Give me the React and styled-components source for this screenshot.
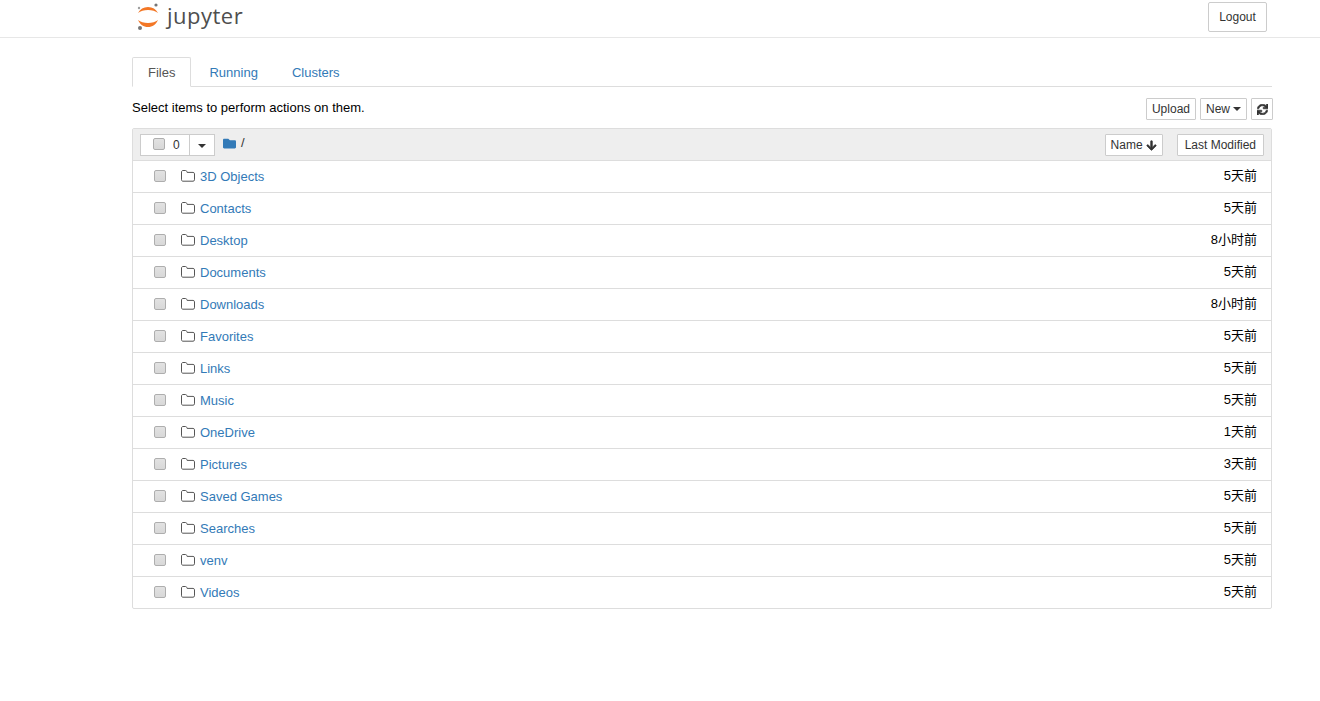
import styled, { createGlobalStyle } from 'styled-components'
import { FaArrowDown, FaFolder, FaSync } from 'react-icons/fa'

const GlobalStyle = createGlobalStyle`
  html, body {
    margin: 0;
    padding: 0;
    background: #fff;
    color: #000;
    font-family: "Liberation Sans", Arial, "Noto Sans CJK SC", sans-serif;
    font-size: 13px;
    line-height: 18px;
  }
`

const Header = styled.header`
  height: 37px;
  border-bottom: 1px solid #e7e7e7;
`
const HeaderInner = styled.div`
  width: 1140px;
  margin-left: 132px;
  height: 100%;
  display: flex;
  justify-content: space-between;
  align-items: flex-start;
`
const LogoBox = styled.div`
  display: flex;
  align-items: flex-start;
  gap: 5px;
  margin-left: 5px;
  padding-top: 1px;
`
const LogoText = styled.span`
  font-family: "Open Sans", sans-serif;
  font-size: 22px;
  line-height: 28px;
  letter-spacing: 0.5px;
  color: #4e4e4e;
`
const LogoutButton = styled.button`
  width: 59px;
  height: 30px;
  margin: 2px 5px 0 0;
  padding: 0;
  background: #fff;
  border: 1px solid #ccc;
  border-radius: 2px;
  color: #333;
  font: 12px "Liberation Sans", sans-serif;
`
const Main = styled.main`
  width: 1140px;
  margin: 19px 0 0 132px;
`
const Tabs = styled.nav`
  display: flex;
  align-items: flex-start;
  box-sizing: border-box;
  height: 30px;
  border-bottom: 1px solid #ddd;
`
const Tab = styled.a`
  box-sizing: border-box;
  height: ${p => (p.$active ? 30 : 29)}px;
  padding: 6px 15px;
  margin-right: 2px;
  border: 1px solid ${p => (p.$active ? '#ddd' : 'transparent')};
  border-bottom: ${p => (p.$active ? '1px solid #fff' : 'none')};
  border-radius: 2px 2px 0 0;
  color: ${p => (p.$active ? '#555' : '#337ab7')};
  background: #fff;
`
const ToolbarRow = styled.div`
  display: flex;
  justify-content: space-between;
  align-items: flex-start;
  height: 41px;
  padding-top: 11px;
  box-sizing: border-box;
`
const Hint = styled.span`
  line-height: 20px;
`
const ToolbarButtons = styled.div`
  display: flex;
  gap: 4px;
  margin-right: -1px;
`
const SmallButton = styled.button`
  box-sizing: border-box;
  height: 22px;
  display: inline-flex;
  align-items: center;
  justify-content: center;
  gap: 3px;
  padding: 0 ${p => p.$pad || 5}px;
  background: #fff;
  border: 1px solid #ccc;
  border-radius: 1px;
  color: #333;
  font: 12px "Liberation Sans", sans-serif;
`
const Caret = styled.span`
  display: inline-block;
  width: 0;
  height: 0;
  border-top: 4px solid #333;
  border-left: 4px solid transparent;
  border-right: 4px solid transparent;
`
const Panel = styled.section`
  border: 1px solid #ddd;
  border-radius: 2px;
`
const PanelHead = styled.div`
  box-sizing: border-box;
  height: 32px;
  display: flex;
  align-items: center;
  background: #eee;
  padding: 0 7px;
  border-bottom: 1px solid #ddd;
`
const SelectGroup = styled.div`
  display: flex;
  box-sizing: border-box;
  height: 22px;
  width: 75px;
  background: #fff;
  border: 1px solid #ccc;
  margin-top: 1px;
`
const SelectCount = styled.div`
  flex: 1;
  display: flex;
  align-items: center;
  gap: 8px;
  padding-left: 12px;
  color: #333;
  font-size: 12px;
  border-right: 1px solid #ccc;
`
const SelectCaret = styled.div`
  width: 24px;
  display: flex;
  align-items: center;
  justify-content: center;
  padding-top: 2px;
  box-sizing: border-box;
`
const Check = styled.input.attrs({ type: 'checkbox' })`
  appearance: none;
  box-sizing: border-box;
  width: 12px;
  height: 12px;
  margin: -2px 0 0;
  background: linear-gradient(#e2e2e2, #d8d8d8);
  border: 1px solid #aeaeae;
  border-radius: 2px;
  flex: none;
`
const Crumb = styled.div`
  display: flex;
  align-items: center;
  gap: 5px;
  margin-left: 8px;
  margin-top: -3px;
  color: #333;
  font-size: 13px;
`
const SortButtons = styled.div`
  margin-left: auto;
  display: flex;
  gap: 14px;
  margin-top: 1px;
`
const Row = styled.div`
  box-sizing: border-box;
  height: ${p => (p.$last ? 31 : 32)}px;
  display: flex;
  align-items: center;
  padding: 0 14px 0 21px;
  border-bottom: ${p => (p.$last ? 'none' : '1px solid #ddd')};
`
const RowFolder = styled.svg`
  width: 14px;
  height: 12px;
  margin-left: 15px;
  margin-top: -2px;
  flex: none;
`
const RowLink = styled.a`
  margin-left: 5px;
  color: #337ab7;
  text-decoration: none;
  padding-top: 1px;
`
const RowTime = styled.span`
  margin-left: auto;
  margin-top: -2px;
  font-family: "Liberation Sans", "Noto Sans CJK SC", sans-serif;
`

const files = [
  ['3D Objects', '5天前'],
  ['Contacts', '5天前'],
  ['Desktop', '8小时前'],
  ['Documents', '5天前'],
  ['Downloads', '8小时前'],
  ['Favorites', '5天前'],
  ['Links', '5天前'],
  ['Music', '5天前'],
  ['OneDrive', '1天前'],
  ['Pictures', '3天前'],
  ['Saved Games', '5天前'],
  ['Searches', '5天前'],
  ['venv', '5天前'],
  ['Videos', '5天前'],
]

function JupyterMark() {
  return (
    <svg width="25" height="30" viewBox="0 0 25 30">
      <path d="M1 12C3 8 6.500 6 11 6s8 2 10 6C18.500 10 15 9 11 9S3.500 10 1 12Z" fill="#f37726" />
      <path d="M1 19c2.500 2 6 3 10 3s7.500-1 10-3c-2 4.500-5.500 7-10 7S3 23.500 1 19Z" fill="#f37726" />
      <circle cx="19" cy="4" r="1.600" fill="#767677" />
      <circle cx="3" cy="27" r="2" fill="#767677" />
      <circle cx="2" cy="7" r="1.200" fill="#9e9e9e" />
    </svg>
  )
}

function OutlineFolder() {
  return (
    <RowFolder viewBox="0 0 14 12">
      <path d="M.5 9.800V2C.5 1.200 1.100.5 2 .5h2.500c.7 0 1.100.4 1.300 1l.3.900h6c.8 0 1.400.6 1.400 1.400v6c0 .8-.6 1.400-1.400 1.400H2C1.100 11.200.5 10.600.5 9.800Z" fill="none" stroke="#555" strokeWidth="1" />
    </RowFolder>
  )
}

export default function App() {
  return (
    <>
      <GlobalStyle />
      <Header>
        <HeaderInner>
          <LogoBox>
            <JupyterMark />
            <LogoText>jupyter</LogoText>
          </LogoBox>
          <LogoutButton>Logout</LogoutButton>
        </HeaderInner>
      </Header>
      <Main>
        <Tabs>
          <Tab $active>Files</Tab>
          <Tab>Running</Tab>
          <Tab>Clusters</Tab>
        </Tabs>
        <ToolbarRow>
          <Hint>Select items to perform actions on them.</Hint>
          <ToolbarButtons>
            <SmallButton>Upload</SmallButton>
            <SmallButton>New <Caret /></SmallButton>
            <SmallButton $pad={4.5}><FaSync size={11} stroke="currentColor" strokeWidth={30} /></SmallButton>
          </ToolbarButtons>
        </ToolbarRow>
        <Panel>
          <PanelHead>
            <SelectGroup>
              <SelectCount><Check />0</SelectCount>
              <SelectCaret><Caret /></SelectCaret>
            </SelectGroup>
            <Crumb><FaFolder size={13} color="#337ab7" />/</Crumb>
            <SortButtons>
              <SmallButton>Name <FaArrowDown size={11} stroke="currentColor" strokeWidth={30} /></SmallButton>
              <SmallButton $pad={7}>Last Modified</SmallButton>
            </SortButtons>
          </PanelHead>
          {files.map(([name, time], i) => (
            <Row key={name} $last={i === files.length - 1}>
              <Check />
              <OutlineFolder />
              <RowLink>{name}</RowLink>
              <RowTime>{time}</RowTime>
            </Row>
          ))}
        </Panel>
      </Main>
    </>
  )
}
